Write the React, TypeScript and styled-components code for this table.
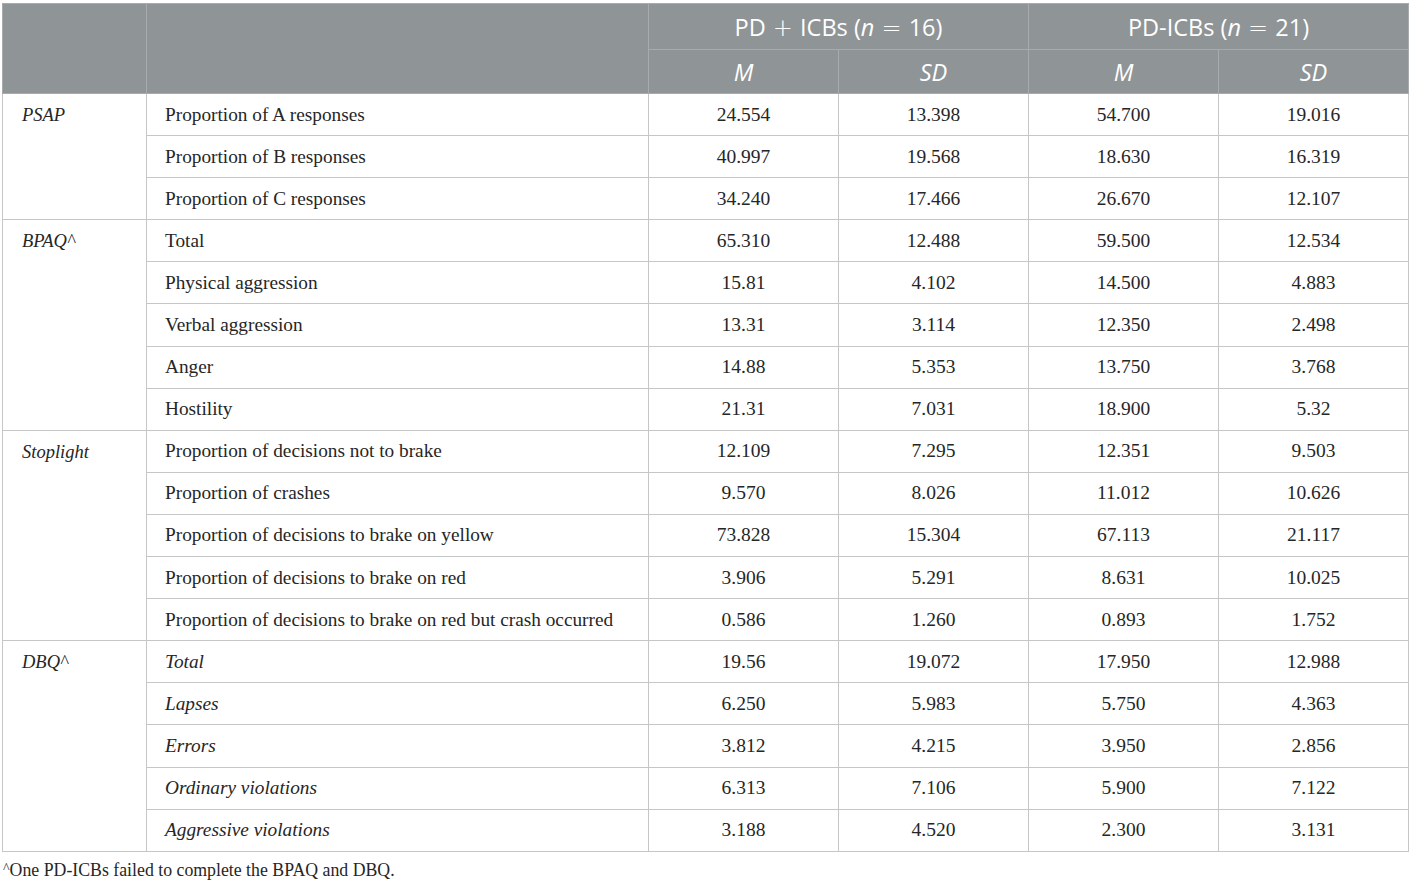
import React from "react"
import styled, { createGlobalStyle } from "styled-components"

const GlobalStyle = createGlobalStyle`
  html, body {
    margin: 0;
    padding: 0;
    background: #ffffff;
  }
`

interface IRow {
  label: string
  values: string[]
  italic?: boolean
}

interface IGroup {
  name: string
  rows: IRow[]
}

const groups: IGroup[] = [
  {
    name: "PSAP",
    rows: [
      { label: "Proportion of A responses", values: ["24.554", "13.398", "54.700", "19.016"] },
      { label: "Proportion of B responses", values: ["40.997", "19.568", "18.630", "16.319"] },
      { label: "Proportion of C responses", values: ["34.240", "17.466", "26.670", "12.107"] },
    ],
  },
  {
    name: "BPAQ^",
    rows: [
      { label: "Total", values: ["65.310", "12.488", "59.500", "12.534"] },
      { label: "Physical aggression", values: ["15.81", "4.102", "14.500", "4.883"] },
      { label: "Verbal aggression", values: ["13.31", "3.114", "12.350", "2.498"] },
      { label: "Anger", values: ["14.88", "5.353", "13.750", "3.768"] },
      { label: "Hostility", values: ["21.31", "7.031", "18.900", "5.32"] },
    ],
  },
  {
    name: "Stoplight",
    rows: [
      { label: "Proportion of decisions not to brake", values: ["12.109", "7.295", "12.351", "9.503"] },
      { label: "Proportion of crashes", values: ["9.570", "8.026", "11.012", "10.626"] },
      { label: "Proportion of decisions to brake on yellow", values: ["73.828", "15.304", "67.113", "21.117"] },
      { label: "Proportion of decisions to brake on red", values: ["3.906", "5.291", "8.631", "10.025"] },
      { label: "Proportion of decisions to brake on red but crash occurred", values: ["0.586", "1.260", "0.893", "1.752"] },
    ],
  },
  {
    name: "DBQ^",
    rows: [
      { label: "Total", values: ["19.56", "19.072", "17.950", "12.988"], italic: true },
      { label: "Lapses", values: ["6.250", "5.983", "5.750", "4.363"], italic: true },
      { label: "Errors", values: ["3.812", "4.215", "3.950", "2.856"], italic: true },
      { label: "Ordinary violations", values: ["6.313", "7.106", "5.900", "7.122"], italic: true },
      { label: "Aggressive violations", values: ["3.188", "4.520", "2.300", "3.131"], italic: true },
    ],
  },
]

const App: React.FC = () => (
  <>
    <GlobalStyle />
    <Page>
      <Table>
        <colgroup>
          <col style={{ width: 144 }} />
          <col style={{ width: 502 }} />
          <col style={{ width: 190 }} />
          <col style={{ width: 190 }} />
          <col style={{ width: 190 }} />
          <col style={{ width: 190 }} />
        </colgroup>
        <thead>
          <HeadRow top>
            <HeadCell rowSpan={2} />
            <HeadCell rowSpan={2} />
            <HeadCell colSpan={2}>
              PD <Op>+</Op> ICBs (<i>n</i> <Op>=</Op> 16)
            </HeadCell>
            <HeadCell colSpan={2}>
              PD-ICBs (<i>n</i> <Op>=</Op> 21)
            </HeadCell>
          </HeadRow>
          <HeadRow>
            <HeadCell italic>M</HeadCell>
            <HeadCell italic>SD</HeadCell>
            <HeadCell italic>M</HeadCell>
            <HeadCell italic>SD</HeadCell>
          </HeadRow>
        </thead>
        <tbody>
          {groups.map((g) =>
            g.rows.map((r, i) => (
              <BodyRow key={g.name + r.label}>
                {i === 0 && <GroupCell rowSpan={g.rows.length}>{g.name}</GroupCell>}
                <LabelCell italic={r.italic}>{r.label}</LabelCell>
                {r.values.map((v, j) => (
                  <NumCell key={j}>{v}</NumCell>
                ))}
              </BodyRow>
            ))
          )}
        </tbody>
      </Table>
      <Footnote>
        <Caret>^</Caret>One PD-ICBs failed to complete the BPAQ and DBQ.
      </Footnote>
    </Page>
  </>
)

export default App

const Page = styled.div`
  padding: 3px 0 0 2px;
  width: 1406px;
  font-family: "Liberation Serif", "Times New Roman", serif;
  color: #262626;
`

const Table = styled.table`
  width: 1406px;
  border-collapse: collapse;
  table-layout: fixed;
  border: 1px solid #b9c4bf;
`

const HeadRow = styled.tr<{ top?: boolean }>`
  height: ${(p) => (p.top ? "46px" : "44px")};
  background: #8f9496;
`

const HeadCell = styled.th.withConfig({
  shouldForwardProp: (prop) => prop !== "italic",
})<{ italic?: boolean }>`
  border: 1px solid #a7abad;
  padding: 0;
  font-family: "Open Sans", "Liberation Sans", sans-serif;
  font-weight: 400;
  font-size: 23.5px;
  font-style: ${(p) => (p.italic ? "italic" : "normal")};
  color: #ffffff;
  text-align: center;
  vertical-align: middle;

  i {
    font-style: italic;
  }
`

const Op = styled.span`
  font-family: "DejaVu Sans", sans-serif;
  font-weight: 300;
  font-size: 24px;
  margin: 0 1px;
`

const BodyRow = styled.tr`
  height: 42.1px;
`

const GroupCell = styled.td`
  border: 1px solid #c4c7c6;
  padding: 0 0 0 19px;
  vertical-align: top;
  line-height: 42px;
  font-style: italic;
  font-size: 18.5px;
`

const LabelCell = styled.td.withConfig({
  shouldForwardProp: (prop) => prop !== "italic",
})<{ italic?: boolean }>`
  border: 1px solid #c4c7c6;
  padding: 0 0 0 18px;
  font-size: 19.3px;
  font-style: ${(p) => (p.italic ? "italic" : "normal")};
  vertical-align: middle;
  white-space: nowrap;
`

const NumCell = styled.td`
  border: 1px solid #c4c7c6;
  padding: 0;
  text-align: center;
  vertical-align: middle;
  font-size: 19.5px;
`

const Footnote = styled.div`
  margin-top: 8px;
  padding-left: 1px;
  font-size: 17.8px;
`

const Caret = styled.span`
  font-size: 14px;
  vertical-align: 3px;
`
